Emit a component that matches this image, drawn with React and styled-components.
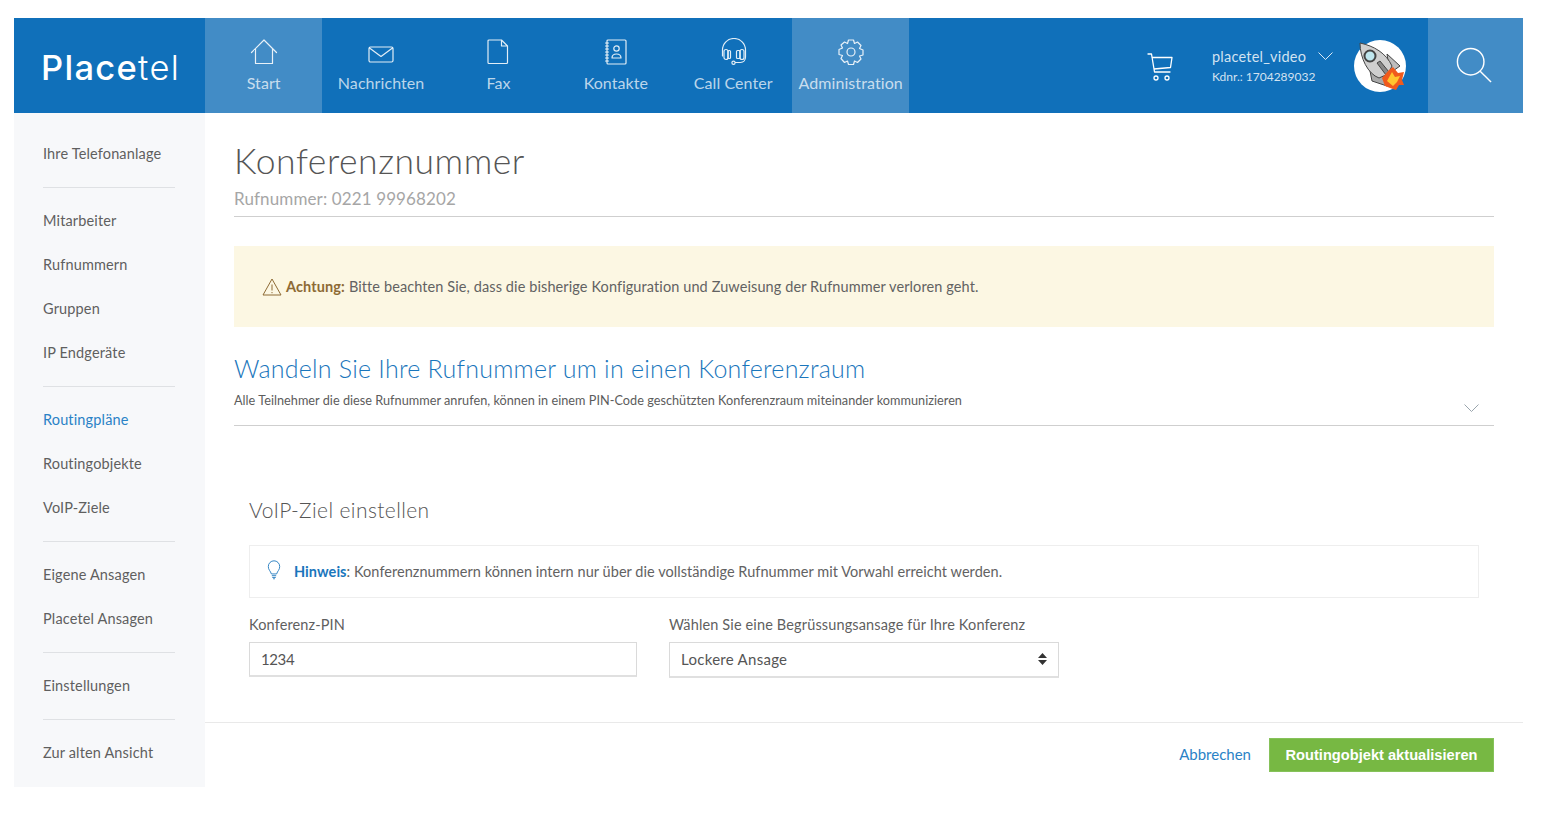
import React from "react";
import styled, { createGlobalStyle } from "styled-components";

const Global = createGlobalStyle`
  html, body { margin: 0; padding: 0; background: #fff; }
  body { font-family: "Lato", "Liberation Sans", sans-serif; color: #5b5b5b; }
  * { box-sizing: border-box; }
`;
const Page = styled.div`
  width: 1509px;
  margin: 18px 0 0 14px;
`;
const Header = styled.header`
  display: flex;
  height: 95px;
  background: #1070ba;
  color: #fff;
`;
const LogoBox = styled.div`
  width: 191px;
  display: flex;
  align-items: center;
  padding: 3px 0 0 27px;
  font-family: "Inter", sans-serif;
  font-size: 34.5px;
  letter-spacing: 1.3px;
  font-weight: 500;
`;
const LogoLight = styled.span`
  font-weight: 300;
`;
const Nav = styled.nav`
  display: flex;
`;
const NavItem = styled.div`
  width: 117.4px;
  display: flex;
  flex-direction: column;
  align-items: center;
  padding-top: 20px;
  background: ${(p) => (p.$active ? "#428cc6" : "transparent")};
  color: rgba(255, 255, 255, 0.72);
  font-size: 16px;
  letter-spacing: 0.08px;
  line-height: 20px;
  white-space: nowrap;
`;
const NavIcon = styled.svg`
  display: block;
  width: 28px;
  height: 28px;
  margin-bottom: 7px;
  fill: none;
  stroke: #fff;
  stroke-opacity: 0.88;
  stroke-width: 1.2;
  stroke-linejoin: round;
  stroke-linecap: round;
`;
const HeaderRight = styled.div`
  margin-left: auto;
  display: flex;
  align-items: center;
`;
const Cart = styled.svg`
  width: 28px;
  height: 30px;
  margin-right: 38px;
  margin-top: 3px;
  fill: none;
  stroke: #fff;
  stroke-width: 1.3;
  stroke-linecap: round;
  stroke-linejoin: round;
`;
const Account = styled.div`
  width: 142px;
  padding-top: 2px;
  color: rgba(255, 255, 255, 0.82);
`;
const AccountName = styled.div`
  display: flex;
  align-items: center;
  gap: 12px;
  font-size: 14.5px;
  letter-spacing: 0.22px;
  line-height: 20px;
`;
const Chevron = styled.svg`
  width: 15px;
  height: 9px;
  fill: none;
  stroke: ${(p) => p.$c || "rgba(255,255,255,.85)"};
  stroke-width: 1;
`;
const AccountNo = styled.div`
  font-size: 12px;
  line-height: 20px;
`;
const Avatar = styled.svg`
  display: block;
  width: 52px;
  height: 52px;
  margin-right: 22px;
`;
const SearchBox = styled.div`
  width: 95px;
  height: 95px;
  padding: 0 3px 2px 0;
  background: #428cc6;
  display: flex;
  align-items: center;
  justify-content: center;
`;
const SearchIcon = styled.svg`
  width: 36px;
  height: 36px;
  fill: none;
  stroke: #fff;
  stroke-width: 1.5;
`;
const Body = styled.div`
  display: flex;
  height: 674px;
`;
const Side = styled.aside`
  width: 191px;
  padding: 18px 30px 0 29px;
  background: #f7f8fa;
`;
const SideItem = styled.div`
  height: 44px;
  display: flex;
  align-items: center;
  font-size: 14.5px;
  letter-spacing: 0.15px;
  white-space: nowrap;
  color: ${(p) => (p.$active ? "#2a82c6" : "#5f5f5f")};
`;
const SideRule = styled.hr`
  margin: 12px 0 10px;
  border: 0;
  border-top: 1px solid #dfe1e4;
`;
const Main = styled.main`
  flex: 1;
  display: flex;
  flex-direction: column;
`;
const Content = styled.div`
  flex: 1;
  padding: 25px 29px 0;
`;
const Title = styled.h1`
  margin: 0;
  font-size: 35.5px;
  line-height: 46px;
  font-weight: 300;
  letter-spacing: 0.55px;
  color: #555;
`;
const Subtitle = styled.div`
  font-size: 17px;
  letter-spacing: 0.12px;
  line-height: 24px;
  color: #a6a6a6;
  margin-top: 3px;
  padding-bottom: 5px;
  border-bottom: 1px solid #cfcfcf;
`;
const Warning = styled.div`
  height: 81px;
  margin-top: 29px;
  padding-left: 28px;
  display: flex;
  align-items: center;
  background: #fcf7e3;
  font-size: 14.5px;
  letter-spacing: 0.1px;
  color: #626262;
`;
const AlertIcon = styled.svg`
  width: 20px;
  height: 18px;
  margin-right: 4px;
  fill: none;
  stroke: #8d6a35;
  stroke-width: 1;
`;
const WarnLabel = styled.strong`
  color: #8d6a35;
  margin-right: 4px;
`;
const SectionHead = styled.div`
  position: relative;
  margin-top: 24px;
  height: 75px;
  border-bottom: 1px solid #cfcfcf;
`;
const SectionTitle = styled.h2`
  margin: 0;
  font-size: 25px;
  line-height: 34px;
  font-weight: 300;
  letter-spacing: 0.24px;
  color: #1a76bc;
`;
const SectionText = styled.div`
  margin-top: 6px;
  font-size: 12.7px;
  letter-spacing: 0.02px;
  line-height: 18px;
  color: #5c5c5c;
`;
const SectionChevron = styled.div`
  position: absolute;
  right: 15px;
  top: 46px;
`;
const Panel = styled.section`
  padding: 0 15px;
`;
const PanelTitle = styled.h3`
  margin: 69px 0 20px;
  font-size: 21px;
  line-height: 30px;
  font-weight: 300;
  letter-spacing: 0.4px;
  color: #555;
`;
const Hint = styled.div`
  height: 53px;
  display: flex;
  align-items: center;
  padding-left: 17px;
  border: 1px solid #eeeeee;
  font-size: 14.5px;
  letter-spacing: 0.05px;
  color: #626262;
`;
const BulbIcon = styled.svg`
  width: 14px;
  height: 20px;
  margin-right: 13px;
  margin-top: -3px;
  fill: none;
  stroke: #1a76bc;
  stroke-width: 1;
`;
const HintLabel = styled.strong`
  color: #1a76bc;
`;
const FormRow = styled.div`
  display: flex;
  gap: 32px;
  margin-top: 17px;
`;
const Field = styled.div`
  width: ${(p) => p.$w}px;
`;
const Label = styled.div`
  font-size: 14.5px;
  letter-spacing: 0.14px;
  line-height: 20px;
  margin-bottom: 7px;
  color: #5f5f5f;
  white-space: nowrap;
`;
const Control = styled.div`
  height: ${(p) => p.$h}px;
  display: flex;
  align-items: center;
  justify-content: space-between;
  padding: 0 11px 1px;
  border: 1px solid #dadada;
  border-bottom: 2px solid #e0e0e0;
  font-size: 15px;
  letter-spacing: ${(p) => p.$ls || 0}px;
  color: #555;
`;
const Sort = styled.svg`
  width: 9px;
  height: 12px;
  fill: #333;
`;
const Footer = styled.footer`
  height: 65px;
  padding: 15px 29px 0 0;
  border-top: 1px solid #e9e9e9;
  display: flex;
  justify-content: flex-end;
  align-items: flex-start;
  gap: 18px;
`;
const Cancel = styled.a`
  font-size: 15px;
  line-height: 33px;
  color: #2a82c6;
`;
const Submit = styled.button`
  width: 225px;
  height: 34px;
  border: 1px solid #86c25a;
  background: #77b843;
  color: #fff;
  font-family: "Liberation Sans", sans-serif;
  font-weight: 700;
  font-size: 14.65px;
  padding: 0;
`;

const navs = [
  ["Start", true, <path d="M1.500 14.500 14 2l12.500 12.500M5.500 11v14.500h17V11" />],
  ["Nachrichten", false, <><rect x="2" y="9" width="24" height="15" rx="1.500" /><path d="m2.500 10 11.500 8.500L25.500 10" /></>],
  ["Fax", false, <path d="M5 2h12.500l6 6v16.500a1 1 0 0 1-1 1H5a1 1 0 0 1-1-1V3a1 1 0 0 1 1-1zM17.500 2v6h6" />],
  ["Kontakte", false, <><rect x="5" y="2" width="19" height="24" rx="1" /><path d="M3.500 5h3M3.500 8h3M3.500 11h3M3.500 14h3M3.500 17h3M3.500 20h3M3.500 23h3M10 20c0-3 2-4 4.500-4s4.500 1 4.500 4z" /><circle cx="14.500" cy="10.500" r="2.700" /></>],
  ["Call Center", false, <><path d="M3.500 18V12a11.500 11.500 0 0 1 23 0v7c0 3-2 5.500-5 5.500h-5" /><rect x="5" y="11.500" width="4" height="10" rx="2" /><rect x="9" y="12.500" width="2.500" height="8" rx="1" /><rect x="21" y="11.500" width="4" height="10" rx="2" /><rect x="17.500" y="12.500" width="3.500" height="8" rx="1" /><circle cx="14.500" cy="24.700" r="1.600" /></>],
  ["Administration", true, <><circle cx="14" cy="14" r="4" /><path d="M11.500 2h5l1 3.500 3-1.500 3.500 3.500-1.500 3 3.500 1.500v5l-3.500 1 1.500 3-3.500 3.500-3-1.500-1 3.500h-5l-1-3.500-3 1.500L4 20.500l1.500-3L2 16.500v-5l3.500-1.500-1.500-3L7.500 4l3 1.500z" /></>],
];
const sideGroups = [
  ["Ihre Telefonanlage"],
  ["Mitarbeiter", "Rufnummern", "Gruppen", "IP Endgeräte"],
  ["Routingpläne", "Routingobjekte", "VoIP-Ziele"],
  ["Eigene Ansagen", "Placetel Ansagen"],
  ["Einstellungen"],
  ["Zur alten Ansicht"],
];

export default function App() {
  return (
    <Page>
      <Global />
      <Header>
        <LogoBox>Place<LogoLight>tel</LogoLight></LogoBox>
        <Nav>
          {navs.map(([label, active, icon]) => (
            <NavItem key={label} $active={active}>
              <NavIcon viewBox="0 0 28 28">{icon}</NavIcon>
              {label}
            </NavItem>
          ))}
        </Nav>
        <HeaderRight>
          <Cart viewBox="0 0 28 30">
            <path d="M2 2h3.500l3 18h15.500M6 5.500h20l-1.500 10-16.500 1.500" />
            <circle cx="10" cy="26" r="2" />
            <circle cx="21" cy="26" r="2" />
          </Cart>
          <Account>
            <AccountName>
              placetel_video
              <Chevron viewBox="0 0 15 9"><path d="m.5.500 7 7 7-7" /></Chevron>
            </AccountName>
            <AccountNo>Kdnr.: 1704289032</AccountNo>
          </Account>
          <Avatar viewBox="0 0 52 52">
            <circle cx="26" cy="26" r="26" fill="#fff" />
            <path d="M33 14 46 26 36 33Z" fill="#bdbdbd" stroke="#444" />
            <path d="M16 31 18 41 33 46 29 36Z" fill="#aaa" stroke="#444" />
            <path d="M6 3c14 3 26 10 32 23l-4 8-9 4C14 34 6 18 6 3Z" fill="#cfcfcf" stroke="#444" />
            <circle cx="16" cy="16" r="5.500" fill="#bfe6ee" stroke="#444" strokeWidth="2" />
            <path d="m23 23 9 12 3-3-9-11Z" fill="#888" stroke="#444" />
            <path d="M28 38 35 30 39 27 44 33 50 32 48 40 50 45 45 45 42 50 36 48 31 46Z" fill="#f05a1c" />
            <path d="M33 41 38 32 41 37 46 36 43 42 39 46Z" fill="#ffc52e" />
          </Avatar>
          <SearchBox>
            <SearchIcon viewBox="0 0 38 38">
              <circle cx="15.500" cy="15.500" r="14" />
              <path d="m25.500 25.500 11.500 11.500" />
            </SearchIcon>
          </SearchBox>
        </HeaderRight>
      </Header>
      <Body>
        <Side>
          {sideGroups.map((group, i) => (
            <React.Fragment key={i}>
              {i > 0 && <SideRule />}
              {group.map((item) => (
                <SideItem key={item} $active={item === "Routingpläne"}>{item}</SideItem>
              ))}
            </React.Fragment>
          ))}
        </Side>
        <Main>
          <Content>
            <Title>Konferenznummer</Title>
            <Subtitle>Rufnummer: 0221 99968202</Subtitle>
            <Warning>
              <AlertIcon viewBox="0 0 20 18">
                <path d="M10 1 19 17H1ZM10 6.500v6M10 14v1.200" />
              </AlertIcon>
              <WarnLabel>Achtung:</WarnLabel>
              Bitte beachten Sie, dass die bisherige Konfiguration und Zuweisung der Rufnummer verloren geht.
            </Warning>
            <SectionHead>
              <SectionTitle>Wandeln Sie Ihre Rufnummer um in einen Konferenzraum</SectionTitle>
              <SectionText>Alle Teilnehmer die diese Rufnummer anrufen, können in einem PIN-Code geschützten Konferenzraum miteinander kommunizieren</SectionText>
              <SectionChevron>
                <Chevron $c="#9aa5ad" viewBox="0 0 15 9"><path d="m.5.500 7 7 7-7" /></Chevron>
              </SectionChevron>
            </SectionHead>
            <Panel>
              <PanelTitle>VoIP-Ziel einstellen</PanelTitle>
              <Hint>
                <BulbIcon viewBox="0 0 16 22">
                  <path d="M5 15.500C4 12 1.500 11 1.500 7a6.500 6.500 0 0 1 13 0c0 4-2.500 5-3.500 8.500zM5.500 17.500h5M6 19.500h4M7 21h2" />
                </BulbIcon>
                <HintLabel>Hinweis</HintLabel>: Konferenznummern können intern nur über die vollständige Rufnummer mit Vorwahl erreicht werden.
              </Hint>
              <FormRow>
                <Field $w={388}>
                  <Label>Konferenz-PIN</Label>
                  <Control $h={35} $ls={-0.4}>1234</Control>
                </Field>
                <Field $w={390}>
                  <Label>Wählen Sie eine Begrüssungsansage für Ihre Konferenz</Label>
                  <Control $h={36} $ls={0.28}>
                    Lockere Ansage
                    <Sort viewBox="0 0 9 12"><path d="M4.500 0 9 5H0ZM0 7h9l-4.500 5Z" /></Sort>
                  </Control>
                </Field>
              </FormRow>
            </Panel>
          </Content>
          <Footer>
            <Cancel>Abbrechen</Cancel>
            <Submit>Routingobjekt aktualisieren</Submit>
          </Footer>
        </Main>
      </Body>
    </Page>
  );
}
